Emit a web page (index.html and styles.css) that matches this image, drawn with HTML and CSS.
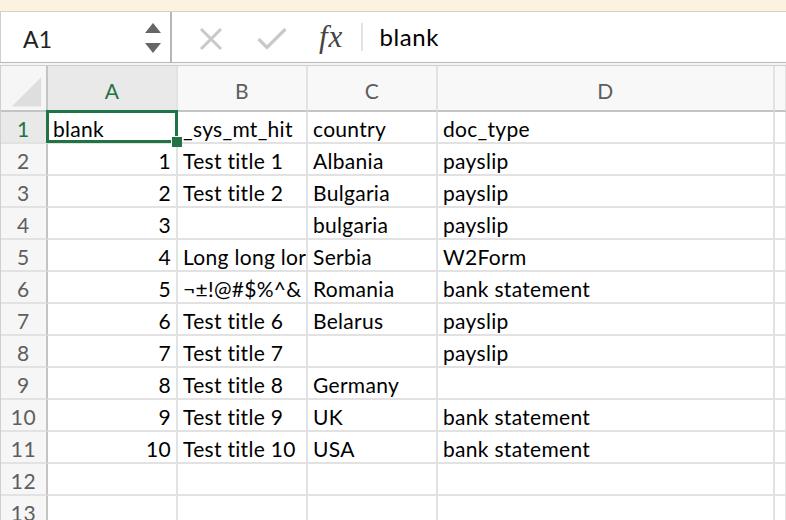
FILE: index.html
```html
<!DOCTYPE html>
<html lang="en">
<head>
<meta charset="utf-8">
<title>Workbook</title>
<link rel="stylesheet" href="styles.css">
</head>
<body>
<div class="app">
  <div class="infobar"></div>

  <div class="formula-bar">
    <div class="name-box">
      <span class="name-ref">A1</span>
      <span class="spinner">
        <svg width="16" height="32" viewBox="0 0 16 32"><path d="M8 1 L16 11 L0 11 Z" fill="#666"/><path d="M0 21 L16 21 L8 31 Z" fill="#666"/></svg>
      </span>
    </div>
    <div class="fx-tools">
      <svg class="tool cancel" width="24" height="22" viewBox="0 0 24 22"><path d="M2 1 L22 21 M22 1 L2 21" stroke="#c9c9c9" stroke-width="3" fill="none"/></svg>
      <svg class="tool confirm" width="30" height="24" viewBox="0 0 30 24"><path d="M1.5 12 L10 20.5 L28.5 2" stroke="#c9c9c9" stroke-width="3.2" fill="none"/></svg>
      <span class="fx">fx</span>
      <span class="fx-sep"></span>
    </div>
    <div class="formula-input">blank</div>
  </div>
  <div class="bar-rule"></div>

  <div class="sheet">
    <div class="corner">
      <svg width="46" height="46" viewBox="0 0 46 46"><path d="M11 41 L41 11 L41 41 Z" fill="#dedede"/></svg>
    </div>
    <div class="col-head active">A</div>
    <div class="col-head">B</div>
    <div class="col-head">C</div>
    <div class="col-head">D</div>
    <div class="col-head"></div>

    <div class="row-head active">1</div>
    <div class="cell selected">blank</div>
    <div class="cell">_sys_mt_hit</div>
    <div class="cell">country</div>
    <div class="cell">doc_type</div>
    <div class="cell"></div>

    <div class="row-head">2</div>
    <div class="cell num">1</div>
    <div class="cell">Test title 1</div>
    <div class="cell">Albania</div>
    <div class="cell">payslip</div>
    <div class="cell"></div>

    <div class="row-head">3</div>
    <div class="cell num">2</div>
    <div class="cell">Test title 2</div>
    <div class="cell">Bulgaria</div>
    <div class="cell">payslip</div>
    <div class="cell"></div>

    <div class="row-head">4</div>
    <div class="cell num">3</div>
    <div class="cell"></div>
    <div class="cell">bulgaria</div>
    <div class="cell">payslip</div>
    <div class="cell"></div>

    <div class="row-head">5</div>
    <div class="cell num">4</div>
    <div class="cell">Long long lor</div>
    <div class="cell">Serbia</div>
    <div class="cell">W2Form</div>
    <div class="cell"></div>

    <div class="row-head">6</div>
    <div class="cell num">5</div>
    <div class="cell">¬±!@#$%^&amp;</div>
    <div class="cell">Romania</div>
    <div class="cell">bank statement</div>
    <div class="cell"></div>

    <div class="row-head">7</div>
    <div class="cell num">6</div>
    <div class="cell">Test title 6</div>
    <div class="cell">Belarus</div>
    <div class="cell">payslip</div>
    <div class="cell"></div>

    <div class="row-head">8</div>
    <div class="cell num">7</div>
    <div class="cell">Test title 7</div>
    <div class="cell"></div>
    <div class="cell">payslip</div>
    <div class="cell"></div>

    <div class="row-head">9</div>
    <div class="cell num">8</div>
    <div class="cell">Test title 8</div>
    <div class="cell">Germany</div>
    <div class="cell"></div>
    <div class="cell"></div>

    <div class="row-head">10</div>
    <div class="cell num">9</div>
    <div class="cell">Test title 9</div>
    <div class="cell">UK</div>
    <div class="cell">bank statement</div>
    <div class="cell"></div>

    <div class="row-head">11</div>
    <div class="cell num">10</div>
    <div class="cell">Test title 10</div>
    <div class="cell">USA</div>
    <div class="cell">bank statement</div>
    <div class="cell"></div>

    <div class="row-head">12</div>
    <div class="cell"></div>
    <div class="cell"></div>
    <div class="cell"></div>
    <div class="cell"></div>
    <div class="cell"></div>

    <div class="row-head">13</div>
    <div class="cell"></div>
    <div class="cell"></div>
    <div class="cell"></div>
    <div class="cell"></div>
    <div class="cell"></div>
  </div>
</div>
</body>
</html>
```

FILE: styles.css
```css
* {
  box-sizing: border-box;
}

html, body {
  margin: 0;
  padding: 0;
  background: #ffffff;
}

body {
  width: 786px;
  height: 520px;
  overflow: hidden;
  font-family: Lato, "Noto Sans", sans-serif;
  color: #000;
}

.app {
  display: flex;
  flex-direction: column;
}

/* message strip above the formula bar */
.infobar {
  height: 12px;
  background: #fbf2df;
  border-bottom: 1px solid #d8d2c3;
}

/* ---------- formula bar ---------- */
.formula-bar {
  height: 50px;
  display: flex;
  align-items: stretch;
  background: #fff;
}

.name-box {
  width: 172px;
  display: flex;
  align-items: center;
  justify-content: space-between;
  padding: 0 9px 0 22px;
  border-left: 1px solid #cfcfcf;
  border-right: 2px solid #b7b7b7;
}

.name-ref {
  font-size: 23px;
  color: #222;
  padding-top: 4px;
  letter-spacing: 0.3px;
}

.spinner {
  display: flex;
  padding-top: 2px;
}

.fx-tools {
  display: flex;
  align-items: center;
  padding-left: 27px;
}

.tool.cancel {
  margin-top: 3px;
}

.tool.confirm {
  margin-left: 34px;
  margin-top: 3px;
}

.fx {
  margin-left: 32px;
  font-family: "Liberation Serif", "DejaVu Serif", serif;
  font-style: italic;
  font-size: 31px;
  color: #444;
  letter-spacing: 1px;
  padding-bottom: 1px;
}

.fx-sep {
  width: 2px;
  height: 28px;
  background: #e4e4e4;
  margin-left: 18px;
}

.formula-input {
  display: flex;
  align-items: center;
  padding-left: 16px;
  font-size: 24px;
  letter-spacing: 0.6px;
  padding-bottom: 1px;
}

/* double rule under the formula bar */
.bar-rule {
  height: 4px;
  border-top: 1px solid #b9b9b9;
  border-bottom: 1px solid #cfcfcf;
  background: #f4f4f4;
}

/* ---------- grid ---------- */
.sheet {
  display: grid;
  grid-template-columns: 47px 130px 130px 130px 337px 1fr;
  grid-template-rows: 46px;
  grid-auto-rows: 32px;
  border-left: 1px solid #cfcfcf;
  font-size: 21px;
  letter-spacing: 0.3px;
}

.corner {
  background: #f6f6f6;
  border-right: 2px solid #c4c4c4;
  border-bottom: 2px solid #c4c4c4;
  display: flex;
  align-items: flex-start;
  justify-content: flex-start;
}

.col-head {
  background: #f8f8f8;
  border-right: 2px solid #e2e2e2;
  border-bottom: 2px solid #c4c4c4;
  display: flex;
  align-items: center;
  justify-content: center;
  color: #5e5e5e;
  font-size: 21px;
  padding-top: 4px;
}

.col-head.active,
.row-head.active {
  background: #e9e9e9;
  color: #217346;
}

.row-head {
  background: #f6f6f6;
  border-right: 2px solid #c4c4c4;
  border-bottom: 2px solid #e2e2e2;
  display: flex;
  align-items: center;
  justify-content: center;
  color: #5e5e5e;
  font-size: 21px;
  letter-spacing: 0.6px;
  padding-top: 2px;
}

.cell {
  border-right: 2px solid #e2e2e2;
  border-bottom: 2px solid #e2e2e2;
  display: flex;
  align-items: center;
  padding: 2px 5px 0 5px;
  white-space: nowrap;
  overflow: hidden;
}

.cell.num {
  justify-content: flex-end;
}

/* active-cell outline and fill handle */
.cell.selected {
  position: relative;
  overflow: visible;
}

.cell.selected::before {
  content: "";
  position: absolute;
  left: -2px;
  top: -2px;
  right: -2px;
  bottom: -1px;
  border: 3px solid #217346;
  pointer-events: none;
}

.cell.selected::after {
  content: "";
  position: absolute;
  right: -6px;
  bottom: -5px;
  width: 10px;
  height: 10px;
  background: #217346;
  border-left: 1px solid #fff;
  border-top: 1px solid #fff;
}
```
